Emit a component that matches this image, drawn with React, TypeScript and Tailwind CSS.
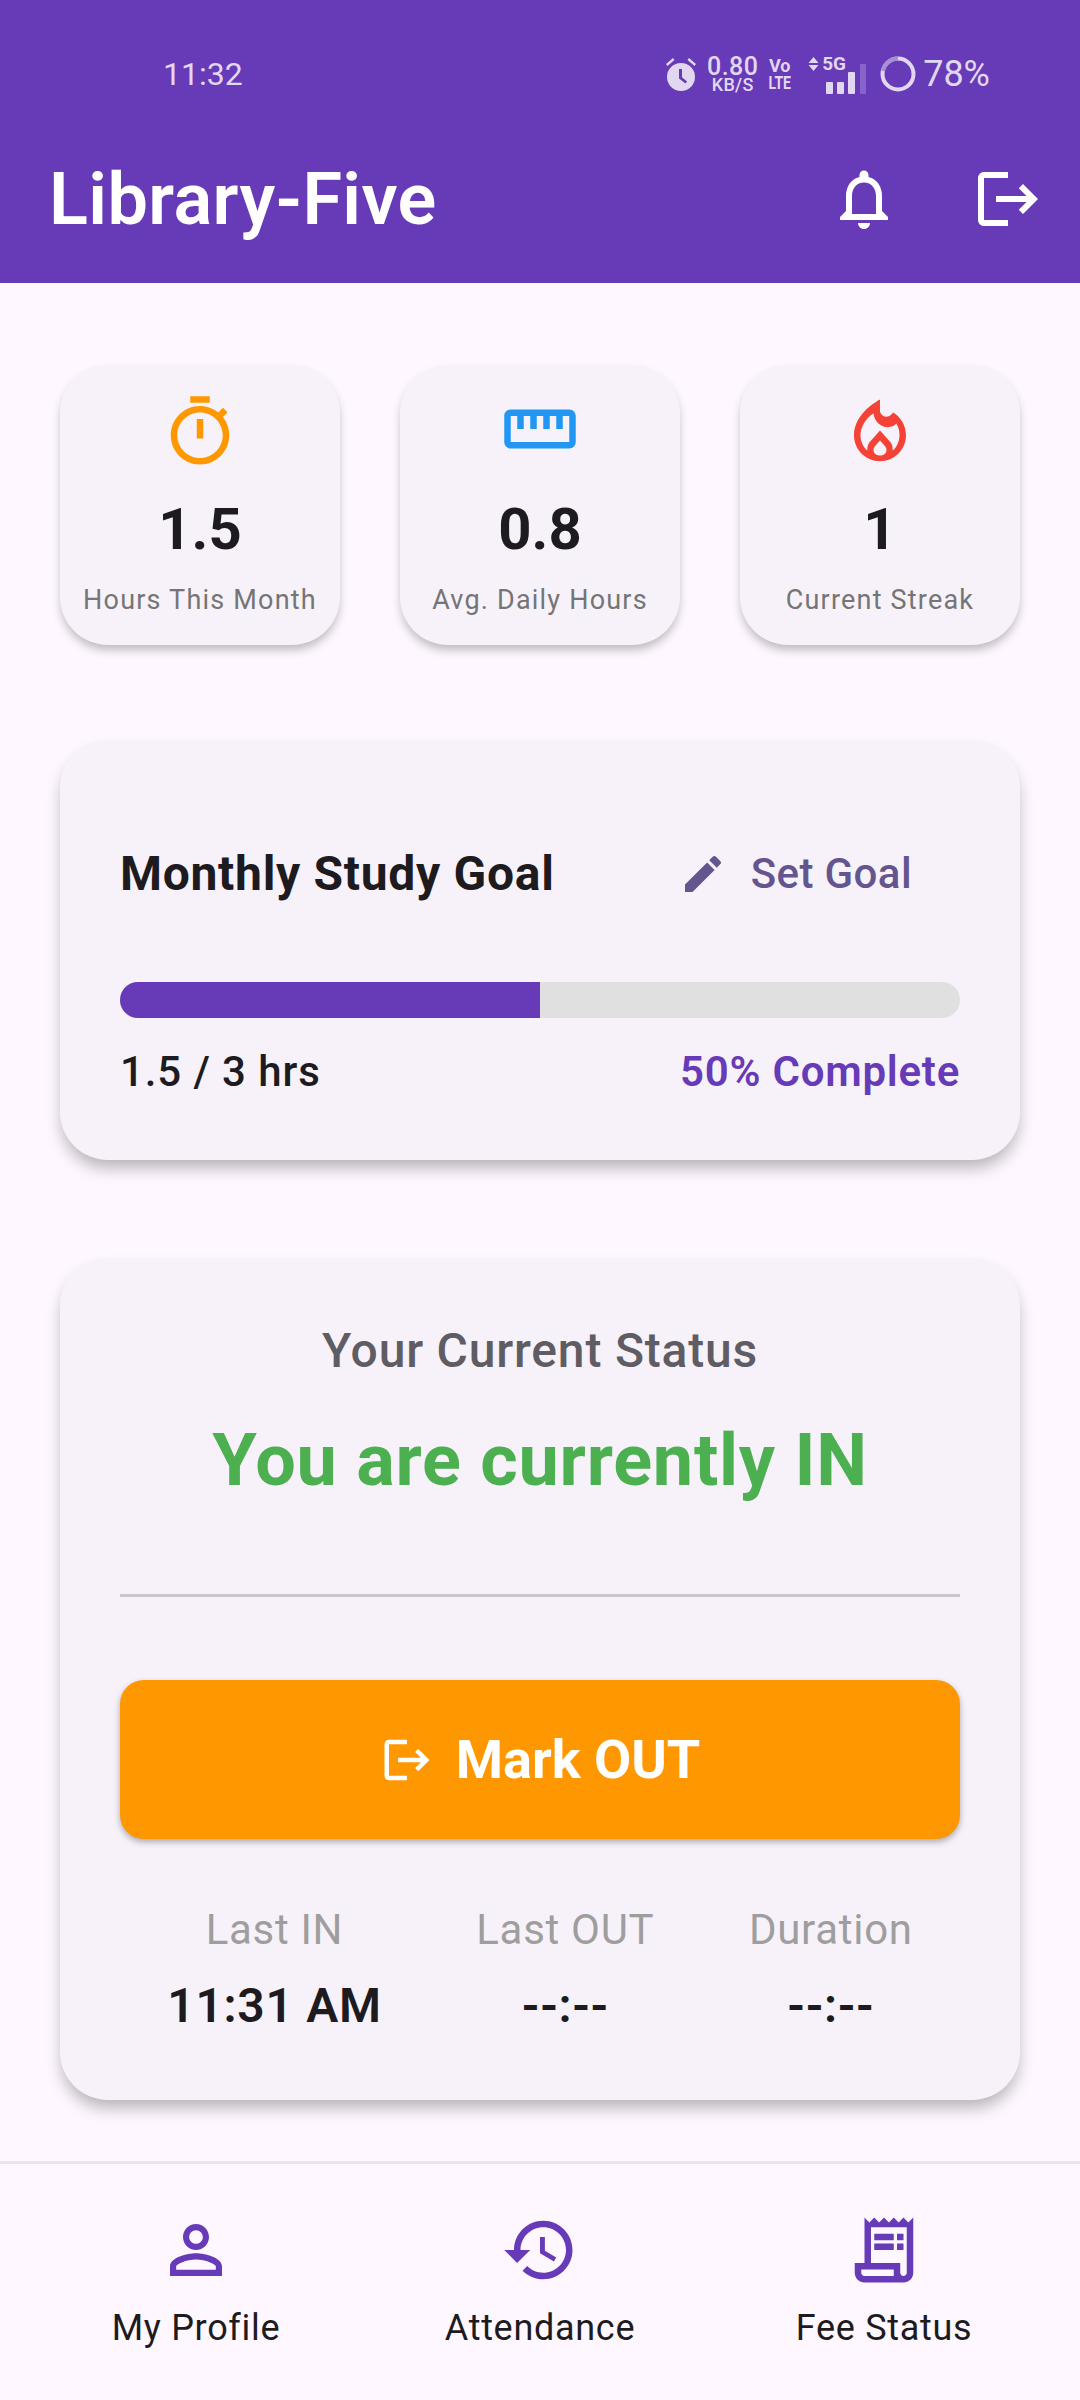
const PURPLE = '#673AB7';

function MIcon({ d, size, color, className }: { d: string; size: number; color: string; className?: string }) {
  return (
    <svg width={size} height={size} viewBox="0 0 24 24" fill={color} fillRule="evenodd" className={className}>
      <path d={d} />
    </svg>
  );
}

const icons = {
  bell: 'M12 22c1.1 0 2-.9 2-2h-4c0 1.1.9 2 2 2zm6-6v-5c0-3.07-1.63-5.64-4.5-6.32V4c0-.83-.67-1.5-1.5-1.5s-1.5.67-1.5 1.5v.68C7.64 5.36 6 7.92 6 11v5l-2 2v1h16v-1l-2-2zm-2 1H8v-6c0-2.48 1.51-4.5 4-4.5s4 2.02 4 4.5v6z',
  logout: 'M17 7l-1.41 1.41L18.17 11H8v2h10.17l-2.58 2.58L17 17l5-5zM4 5h8V3H4c-1.1 0-2 .9-2 2v14c0 1.1.9 2 2 2h8v-2H4V5z',
  timer: 'M15 1H9v2h6V1zm-4 13h2V8h-2v6zm8.03-6.61l1.42-1.42c-.43-.51-.9-.99-1.41-1.41l-1.42 1.42C16.07 4.74 14.12 4 12 4c-4.97 0-9 4.03-9 9s4.02 9 9 9 9-4.03 9-9c0-2.12-.74-4.07-1.97-5.61zM12 20c-3.87 0-7-3.13-7-7s3.13-7 7-7 7 3.13 7 7-3.13 7-7 7z',
  ruler: 'M21 6H3c-1.1 0-2 .9-2 2v8c0 1.1.9 2 2 2h18c1.1 0 2-.9 2-2V8c0-1.1-.9-2-2-2zm0 10H3V8h2v4h2V8h2v4h2V8h2v4h2V8h2v4h2V8h2v8z',
  fire: 'M16 6l-.44.55C14.38 8.02 12 7.19 12 5.3V2S4 6 4 13c0 4.42 3.58 8 8 8s8-3.58 8-8c0-2.96-1.61-5.62-4-7zM6 13c0-2.4 1.4-5 4-6.8.2 2.6 2.4 4.3 4.4 4.3 1.1 0 2-.4 2.6-1.1.7 1.1 1 2.3 1 3.6 0 2-1 3.9-2.1 4.7.1-1-.2-2.1-1-2.9L12 11.5l-2.9 3.3c-.8.8-1.100 1.9-1 2.9C6.900 16.7 6 15 6 13zM12 14.600l1.300 1.500c.4.4.7.9.7 1.400 0 1-.9 1.700-2 1.700s-2-.7-2-1.700c0-.5.3-1 .7-1.400z',
  edit: 'M3 17.25V21h3.75L17.81 9.94l-3.75-3.75L3 17.25zM20.71 7.04c.39-.39.39-1.02 0-1.41l-2.34-2.34c-.39-.39-1.02-.39-1.41 0l-1.83 1.83 3.75 3.75 1.83-1.83z',
  person: 'M12 5.9c1.16 0 2.1.94 2.1 2.1s-.94 2.1-2.1 2.1S9.9 9.16 9.9 8s.94-2.1 2.1-2.1m0 9c2.97 0 6.1 1.46 6.1 2.1v1.1H5.9V17c0-.64 3.13-2.1 6.1-2.1M12 4C9.79 4 8 5.79 8 8s1.79 4 4 4 4-1.79 4-4-1.79-4-4-4zm0 9c-2.67 0-8 1.34-8 4v3h16v-3c0-2.66-5.33-4-8-4z',
  history: 'M13 3c-4.97 0-9 4.03-9 9H1l3.89 3.89.07.14L9 12H6c0-3.87 3.13-7 7-7s7 3.13 7 7-3.13 7-7 7c-1.93 0-3.68-.79-4.94-2.06l-1.42 1.42C8.27 19.99 10.51 21 13 21c4.97 0 9-4.03 9-9s-4.03-9-9-9zm-1 5v5l4.28 2.54.72-1.21-3.5-2.08V8H12z',
  receipt: 'M19.5 3.5L18 2l-1.5 1.5L15 2l-1.5 1.5L12 2l-1.5 1.5L9 2 7.5 3.5 6 2v14H3v3c0 1.66 1.34 3 3 3h12c1.66 0 3-1.34 3-3V2l-1.5 1.5zM15 20H6c-.55 0-1-.45-1-1v-1h10v2zm4-1c0 .55-.45 1-1 1s-1-.45-1-1v-3H8V5h11v14zM9 7h6v2H9zM16 7h2v2h-2zM9 10h6v2H9zM16 10h2v2h-2z',
};

function StatusBar() {
  return (
    <div className="h-[146px] pl-[163px] pr-[90px] pt-[52px] flex justify-between items-start text-[#E1D7F1]">
      <span className="text-[32px] leading-[42px] mt-[1px]">11:32</span>
      <div className="flex items-center h-[44px]">
        <svg width="32" height="36" viewBox="0 0 32 36">
          <circle cx="16" cy="21" r="14" fill="#E1D7F1" />
          <path d="M14 13v9.500l6.500 5 1.500-2-5-4.200V13z" fill={PURPLE} />
          <path d="M1 8l7-6 1.500 2-7 6zM31 8l-7-6-1.500 2 7 6z" fill="#E1D7F1" />
        </svg>
        <div className="w-[51px] flex flex-col items-center ml-[10px] font-medium">
          <span className="text-[25px] leading-[21px] tracking-[0.4px]">0.80</span>
          <span className="text-[18px] leading-[15px] tracking-[0.3px]">KB/S</span>
        </div>
        <div className="w-[21px] flex flex-col items-center ml-[11px] font-bold">
          <span className="text-[18px] leading-[18px]">Vo</span>
          <span className="text-[14px] leading-[16px] scale-y-125">LTE</span>
        </div>
        <div className="relative w-[60px] h-[34px] ml-[18px]">
          <svg width="11" height="16" viewBox="0 0 11 16" className="absolute left-0 top-[-1px]">
            <path d="M5.500 1l5 6H.5zM5.500 15l5-6H.5z" fill="#E1D7F1" />
          </svg>
          <span className="absolute left-[14px] top-[-3px] text-[19px] leading-[20px] font-bold">5G</span>
          <div className="absolute left-[18px] bottom-[-3px] flex items-end gap-[4px]">
            <div className="w-[7px] h-[12px] bg-[#E1D7F1] rounded-[1px]" />
            <div className="w-[7px] h-[12px] bg-[#E1D7F1] rounded-[1px]" />
            <div className="w-[7px] h-[22px] bg-[#E1D7F1] rounded-[1px]" />
            <div className="w-[6px] h-[30px] bg-[#8764C8] rounded-[1px] ml-[1px]" />
          </div>
        </div>
        <svg width="36" height="36" viewBox="0 0 36 36" className="ml-[12px]">
          <circle cx="18" cy="18" r="15.500" fill="none" stroke="#E1D7F1" strokeWidth="4" />
          <path d="M18 2.500A15.500 15.500 0 0 0 2.800 15" fill="none" stroke="#A78FD6" strokeWidth="4" />
        </svg>
        <span className="text-[36px] leading-[42px] ml-[7px]">78%</span>
      </div>
    </div>
  );
}

function Header() {
  return (
    <header className="bg-[#673AB7] h-[283px] shrink-0">
      <StatusBar />
      <div className="flex items-center justify-between h-[104px] pl-[49px] mt-[1px]">
        <h1 className="text-[72px] font-semibold text-white leading-none mt-[1px] tracking-[0.4px]">Library-Five</h1>
        <div className="flex">
          <button className="w-[144px] h-[104px] flex items-center justify-center">
            <MIcon d={icons.bell} size={72} color="#fff" />
          </button>
          <button className="w-[144px] h-[104px] flex items-center justify-center">
            <MIcon d={icons.logout} size={72} color="#fff" />
          </button>
        </div>
      </div>
    </header>
  );
}

function StatCard({ icon, color, value, label, iconClass }: { icon: string; color: string; value: string; label: string; iconClass?: string }) {
  return (
    <div className="w-[280px] h-[280px] rounded-[48px] bg-[#F7F2FA] shadow-[0_6px_10px_-1px_rgba(0,0,0,0.25)] flex flex-col items-center pt-[28px]">
      <MIcon d={icon} size={78} color={color} className={iconClass} />
      <span className="text-[58px] leading-[60px] font-bold text-[#1D1B20] mt-[28px]">{value}</span>
      <span className="text-[27px] leading-[36px] text-[#757575] tracking-[1.2px] mt-[23px] whitespace-nowrap">{label}</span>
    </div>
  );
}

function GoalCard() {
  return (
    <section className="h-[420px] rounded-[48px] bg-[#F7F2FA] shadow-[0_10px_16px_-2px_rgba(0,0,0,0.28)] px-[60px] pt-[101px]">
      <div className="flex items-center justify-between h-[66px]">
        <h2 className="text-[48px] font-bold text-[#1D1B20] leading-[66px] tracking-[0.7px]">Monthly Study Goal</h2>
        <button className="flex items-center gap-[24px] pr-[48px]">
          <MIcon d={icons.edit} size={48} color="#65558F" />
          <span className="text-[42px] font-medium text-[#65558F] leading-[48px] tracking-[0.4px]">Set Goal</span>
        </button>
      </div>
      <div className="h-[36px] rounded-full bg-[#E0E0E0] overflow-hidden mt-[75px]">
        <div className="h-full bg-[#673AB7]" style={{ width: '50%' }} />
      </div>
      <div className="flex items-center justify-between h-[50px] mt-[28px]">
        <span className="text-[42px] font-medium text-[#1D1B20] tracking-[0.9px]">1.5 / 3 hrs</span>
        <span className="text-[42px] font-semibold text-[#673AB7] tracking-[0.75px]">50% Complete</span>
      </div>
    </section>
  );
}

function TimeColumn({ label, value }: { label: string; value: string }) {
  return (
    <div className="flex flex-col items-center">
      <span className="text-[42px] leading-[50px] text-[#9E9E9E] tracking-[0.7px]">{label}</span>
      <span className="text-[48px] leading-[56px] font-semibold text-[#1D1B20] mt-[23px] tracking-[0.7px]">{value}</span>
    </div>
  );
}

function StatusCard() {
  return (
    <section className="h-[842px] rounded-[48px] bg-[#F7F2FA] shadow-[0_10px_16px_-2px_rgba(0,0,0,0.28)] px-[60px] pt-[63px]">
      <p className="text-[48px] leading-[60px] font-medium text-[#5F5C63] text-center tracking-[0.8px]">Your Current Status</p>
      <p className="text-[72px] leading-[88px] font-bold text-[#4CAF50] text-center mt-[36px] tracking-[0.75px]">You are currently IN</p>
      <div className="h-[3px] bg-[#CAC4D0] mt-[89px]" />
      <button className="w-full h-[159px] mt-[83px] rounded-[24px] bg-[#FF9800] shadow-[0_3px_6px_rgba(0,0,0,0.3)] flex items-center justify-center gap-[22px]">
        <MIcon d={icons.logout} size={54} color="#fff" />
        <span className="text-[54px] font-bold text-white leading-none">Mark OUT</span>
      </button>
      <div className="flex justify-around mt-[66px]">
        <TimeColumn label="Last IN" value="11:31 AM" />
        <TimeColumn label="Last OUT" value="--:--" />
        <TimeColumn label="Duration" value="--:--" />
      </div>
    </section>
  );
}

function NavItem({ icon, label }: { icon: string; label: string }) {
  return (
    <button className="flex flex-col items-center">
      <MIcon d={icon} size={78} color={PURPLE} />
      <span className="text-[36px] leading-[44px] text-[#1D1B20] mt-[17px] tracking-[0.7px]">{label}</span>
    </button>
  );
}

export default function App() {
  return (
    <div className="w-[1080px] h-[2400px] bg-[#FEF7FF] flex flex-col font-['Roboto',sans-serif] overflow-hidden">
      <Header />
      <main className="flex-1 px-[60px] pt-[82px]">
        <div className="flex justify-between">
          <StatCard icon={icons.timer} color="#FF9800" value="1.5" label="Hours This Month" />
          <StatCard icon={icons.ruler} color="#2196F3" value="0.8" label="Avg. Daily Hours" iconClass="-translate-y-[3px]" />
          <StatCard icon={icons.fire} color="#F44336" value="1" label="Current Streak" />
        </div>
        <div className="mt-[95px]">
          <GoalCard />
        </div>
        <div className="mt-[98px]">
          <StatusCard />
        </div>
      </main>
      <nav className="h-[239px] shrink-0 border-t-[3px] border-[#E9E5EA] grid grid-cols-3 px-[24px] pt-[47px] items-start">
        <NavItem icon={icons.person} label="My Profile" />
        <NavItem icon={icons.history} label="Attendance" />
        <NavItem icon={icons.receipt} label="Fee Status" />
      </nav>
    </div>
  );
}
